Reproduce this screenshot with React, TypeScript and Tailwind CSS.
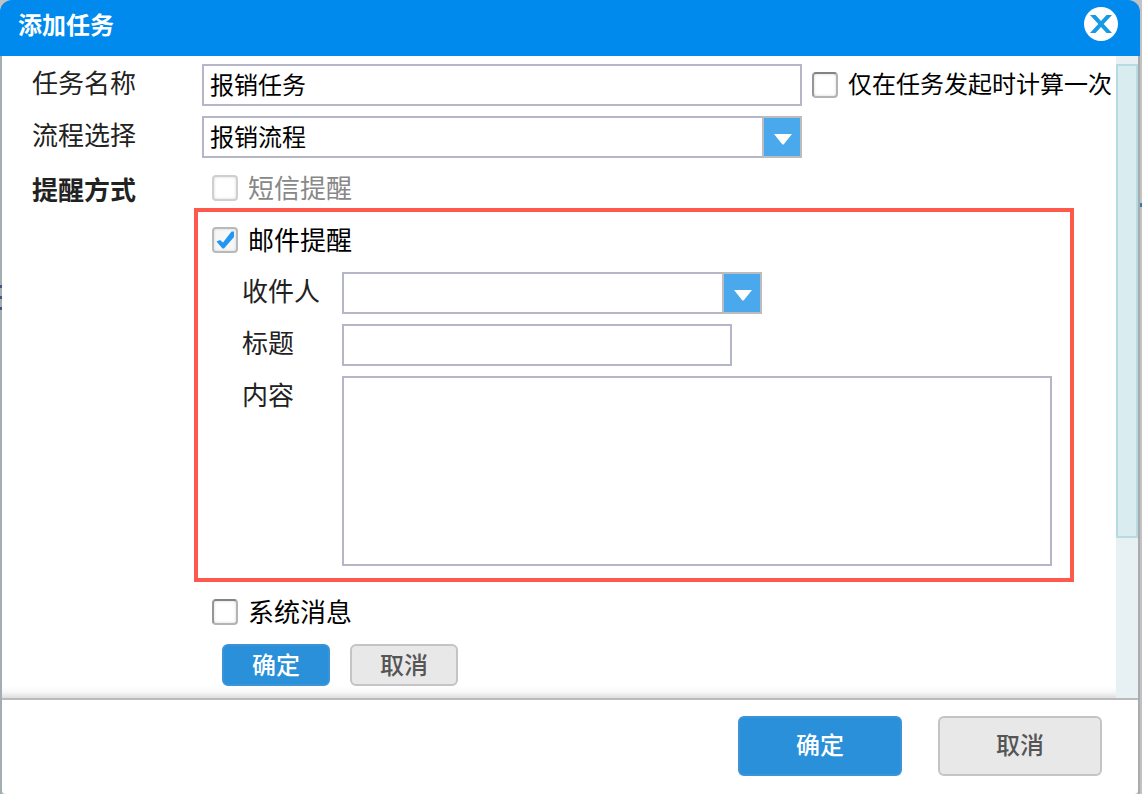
import { useState } from "react";
import type { ReactNode } from "react";
import { clsx } from "clsx";

type CheckboxProps = {
  id: string;
  label: string;
  size?: "base" | "large";
  disabled?: boolean;
  defaultChecked?: boolean;
};

function Checkbox({ id, label, size = "large", disabled, defaultChecked }: CheckboxProps) {
  const [checked, setChecked] = useState(Boolean(defaultChecked));

  return (
    <div className="flex shrink-0 items-center gap-2.5">
      <span className="relative block size-[26px] shrink-0">
        <input
          id={id}
          type="checkbox"
          checked={checked}
          disabled={disabled}
          onChange={(e) => setChecked(e.target.checked)}
          className={clsx(
            "block size-[26px] appearance-none rounded-sm border-2 shadow-[inset_0_0_3px_#d4d4d4]",
            disabled && "border-[#cfcfcf] bg-white",
            !disabled && checked && "border-[#b9b9b9] bg-[#f7f7f7]",
            !disabled && !checked && "border-[#b4b4b4] border-t-[#838383] border-l-[#969696] bg-white"
          )}
        />
        {checked && (
          <svg
            viewBox="0 0 26 26"
            className="pointer-events-none absolute inset-0 size-[26px]"
            aria-hidden="true"
          >
            <path d="M4.5 14.5 8 13l3 2.5L19.5 4.5H22V10L12 21.5h-1.5Z" fill="#2196f3" />
          </svg>
        )}
      </span>
      <label
        htmlFor={id}
        className={clsx(
          "whitespace-nowrap",
          size === "large" ? "pt-0.5 text-[26px] leading-10" : "text-[24px] leading-10",
          disabled ? "text-[#888888]" : "text-black"
        )}
      >
        {label}
      </label>
    </div>
  );
}

type SelectBoxProps = {
  id: string;
  options: string[];
  className?: string;
};

function SelectBox({ id, options, className }: SelectBoxProps) {
  return (
    <div className={clsx("relative h-[42px] w-full", className)}>
      <select
        id={id}
        className="block h-full w-full appearance-none border-2 border-[#b5b7c8] bg-white pt-0.5 pr-10 pl-1.5 text-[24px] text-black"
      >
        {options.map((option) => (
          <option key={option}>{option}</option>
        ))}
      </select>
      <span className="pointer-events-none absolute inset-y-0 right-0 flex w-10 items-center justify-center border-2 border-[#bcbcc0] bg-[#4aa8ec]">
        <svg viewBox="0 0 18 11" className="mt-1 ml-0.5 h-[11px] w-[18px]" aria-hidden="true">
          <path d="M0 0h18l-8 10q-1 1-2 0Z" fill="#ffffff" />
        </svg>
      </span>
    </div>
  );
}

function FieldLabel({ htmlFor, children }: { htmlFor: string; children: ReactNode }) {
  return (
    <label htmlFor={htmlFor} className="text-[26px] leading-10 text-[#222222]">
      {children}
    </label>
  );
}

type DialogButtonProps = {
  children: ReactNode;
  primary?: boolean;
  large?: boolean;
};

function DialogButton({ children, primary, large }: DialogButtonProps) {
  return (
    <button
      type="button"
      className={clsx(
        "rounded-md border-2 text-[24px] font-medium",
        large ? "h-[60px] w-[164px]" : "h-[42px] w-[108px] pt-0.5",
        primary
          ? "border-[#3c94d8] bg-[#2990d9] text-white"
          : "border-[#c4c4c4] bg-[#e8e8e8] text-[#555555]"
      )}
    >
      {children}
    </button>
  );
}

function ScrollTrack() {
  return (
    <div className="flex w-[22px] shrink-0 flex-col bg-[#e7f0f3] pt-2" aria-hidden="true">
      <div className="h-[474px] border-2 border-[#b6dce2] bg-[#d9ecef]" />
    </div>
  );
}

// Slivers of the page behind the dialog
function LeftEdge() {
  return (
    <div className="flex w-0.5 shrink-0 flex-col gap-2 bg-[#a3aeb3] pt-[229px]" aria-hidden="true">
      <div className="h-[3px] bg-[#46557f]" />
      <div className="h-[3px] bg-[#46557f]" />
      <div className="h-[3px] bg-[#46557f]" />
    </div>
  );
}

function RightEdge() {
  return (
    <div className="flex w-1 shrink-0" aria-hidden="true">
      <div className="w-0.5 bg-[#a9abae]" />
      <div className="w-0.5 bg-[#c2c2c2] pt-[147px]">
        <div className="h-1 bg-[#3e78a5]" />
      </div>
    </div>
  );
}

export default function App() {
  return (
    <div className="flex min-h-screen flex-col bg-[#c2c2c2] font-['Liberation_Sans','Noto_Sans_CJK_SC',sans-serif]">
      <header className="mr-0.5 flex h-14 items-center justify-between rounded-t-xl bg-[#008aee] pr-[22px] pb-2 pl-[18px]">
        <h1 className="pt-1 text-[24px] font-bold text-white">添加任务</h1>
        <button
          type="button"
          aria-label="关闭"
          className="flex size-[34px] items-center justify-center rounded-full bg-white"
        >
          <svg viewBox="0 0 22 20" className="h-5 w-[22px]" aria-hidden="true">
            <path
              d="M0 1h5.5L11 7l5.5-6H22l-8.3 9 8.3 9h-5.5L11 13l-5.500 6H0l8.300-9Z"
              fill="#169be3"
            />
          </svg>
        </button>
      </header>

      <div className="flex flex-1">
        <LeftEdge />
        <form
          className="flex min-w-0 flex-1 flex-col rounded-b-sm bg-white"
          onSubmit={(e) => e.preventDefault()}
        >
          <div className="flex">
            <div className="min-w-0 flex-1">
              <div className="grid grid-cols-[170px_minmax(0,1fr)] gap-y-2.5 pt-2 pl-[30px]">
                <FieldLabel htmlFor="task-name">任务名称</FieldLabel>
                <div className="flex items-center gap-2.5 pr-1">
                  <input
                    id="task-name"
                    type="text"
                    defaultValue="报销任务"
                    className="h-[42px] min-w-0 flex-1 border-2 border-[#b5b7c8] bg-white px-1.5 pb-1 text-[24px] text-black"
                  />
                  <Checkbox id="calc-once" label="仅在任务发起时计算一次" size="base" />
                </div>

                <FieldLabel htmlFor="process">流程选择</FieldLabel>
                <SelectBox id="process" options={["报销流程"]} className="max-w-[600px]" />

                <h2 className="text-[26px] leading-[46px] font-bold text-[#222222]">提醒方式</h2>
                <div>
                  <div className="flex h-10 items-center pl-2.5">
                    <Checkbox id="sms" label="短信提醒" disabled />
                  </div>

                  <section className="mr-[42px] -ml-2 border-4 border-[#ff584c] pr-[18px] pb-3 pl-3.5">
                    <div className="flex h-14 items-center">
                      <Checkbox id="mail" label="邮件提醒" defaultChecked />
                    </div>
                    <div className="grid grid-cols-[100px_minmax(0,1fr)] gap-y-2.5 pt-1 pl-[30px]">
                      <FieldLabel htmlFor="recipient">收件人</FieldLabel>
                      <SelectBox id="recipient" options={[""]} className="max-w-[420px]" />

                      <FieldLabel htmlFor="subject">标题</FieldLabel>
                      <input
                        id="subject"
                        type="text"
                        className="h-[42px] w-full max-w-[390px] border-2 border-[#b5b7c8] bg-white px-1.5 pb-1 text-[24px] text-black"
                      />

                      <FieldLabel htmlFor="content">内容</FieldLabel>
                      <textarea
                        id="content"
                        className="block h-[190px] w-full resize-none border-2 border-[#b5b7c8] bg-white px-1.5 text-[24px] text-black"
                      />
                    </div>
                  </section>

                  <div className="flex h-[60px] items-center pl-2.5">
                    <Checkbox id="system" label="系统消息" />
                  </div>
                  <div className="flex gap-5 pt-0.5 pl-5">
                    <DialogButton primary>确定</DialogButton>
                    <DialogButton>取消</DialogButton>
                  </div>
                </div>
              </div>
              <div className="h-3 bg-linear-to-b from-white via-[#f8f8f8] to-[#dedede]" />
            </div>
            <ScrollTrack />
          </div>

          <footer className="flex justify-end gap-9 border-t-2 border-[#bababa] px-9 pt-4 pb-[18px]">
            <DialogButton primary large>
              确定
            </DialogButton>
            <DialogButton large>取消</DialogButton>
          </footer>
        </form>
        <RightEdge />
      </div>
    </div>
  );
}
